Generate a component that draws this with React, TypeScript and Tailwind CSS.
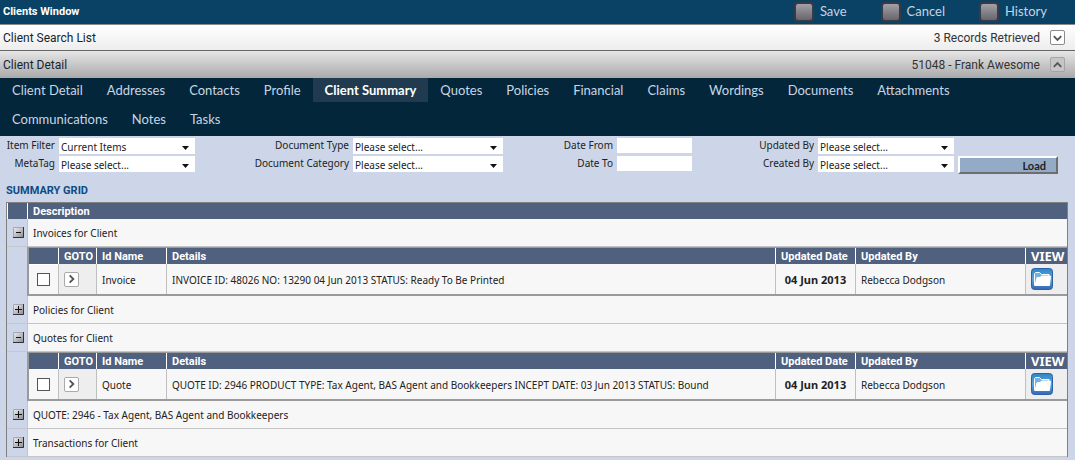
import { Fragment, useState } from "react";
import type { ReactNode } from "react";

type GridItem = {
  id: string;
  name: string;
  details: string;
  updated: string;
  by: string;
};

type GridGroup = {
  title: string;
  items?: GridItem[];
};

const ACTIONS = ["Save", "Cancel", "History"];

const TABS = [
  "Client Detail",
  "Addresses",
  "Contacts",
  "Profile",
  "Client Summary",
  "Quotes",
  "Policies",
  "Financial",
  "Claims",
  "Wordings",
  "Documents",
  "Attachments",
  "Communications",
  "Notes",
  "Tasks",
];

const GROUPS: GridGroup[] = [
  {
    title: "Invoices for Client",
    items: [
      {
        id: "invoice-48026",
        name: "Invoice",
        details: "INVOICE ID: 48026 NO: 13290 04 Jun 2013 STATUS: Ready To Be Printed",
        updated: "04 Jun 2013",
        by: "Rebecca Dodgson",
      },
    ],
  },
  { title: "Policies for Client" },
  {
    title: "Quotes for Client",
    items: [
      {
        id: "quote-2946",
        name: "Quote",
        details:
          "QUOTE ID: 2946 PRODUCT TYPE: Tax Agent, BAS Agent and Bookkeepers INCEPT DATE: 03 Jun 2013 STATUS: Bound",
        updated: "04 Jun 2013",
        by: "Rebecca Dodgson",
      },
    ],
  },
  { title: "QUOTE: 2946 - Tax Agent, BAS Agent and Bookkeepers" },
  { title: "Transactions for Client" },
];

function FolderIcon() {
  return (
    <svg width="22" height="22" viewBox="0 0 22 22" aria-hidden="true">
      <defs>
        <linearGradient id="folder-bg" x1="0" y1="0" x2="0" y2="1">
          <stop offset="0" stopColor="#2f86c4" />
          <stop offset="0.5" stopColor="#5aa6dc" />
          <stop offset="1" stopColor="#3567b4" />
        </linearGradient>
      </defs>
      <rect x="0.5" y="0.5" width="21" height="21" rx="3" fill="url(#folder-bg)" stroke="#2a62a8" />
      <path d="M3.5 17.5v-12L4.5 4.5h4l2 2h7.5V9" fill="#6fb4e4" stroke="#fff" />
      <path d="M4 17.5 6 9.5h3l1.5-1.5h9l-1 9.5z" fill="#fff" stroke="#fff" strokeLinejoin="round" />
    </svg>
  );
}

function ExpandIcon({ open }: { open: boolean }) {
  return (
    <svg width="11" height="11" viewBox="0 0 11 11" aria-hidden="true" className="block">
      <defs>
        <linearGradient id="expand-bg" x1="0" y1="0" x2="1" y2="1">
          <stop offset="0" stopColor="#f4f4f6" />
          <stop offset="1" stopColor="#85858f" />
        </linearGradient>
      </defs>
      <path d="M0 0h11v11H0z" fill="url(#expand-bg)" />
      <path d="M.5 11V.5H11" fill="none" stroke="#a4a6ae" />
      <path d="M0 10.5h10.5V0" fill="none" stroke="#30303c" />
      <path d={open ? "M3 5.5h5" : "M2 5.5h7M5.5 2v7"} stroke="#111" />
    </svg>
  );
}

function Chevron({ dir }: { dir: "up" | "down" | "right" }) {
  const paths = {
    up: "M3 9l4-4 4 4",
    down: "M3 5l4 4 4-4",
    right: "M5 3l4 4-4 4",
  };
  return (
    <svg width="14" height="14" viewBox="0 0 14 14" aria-hidden="true">
      <path d={paths[dir]} fill="none" stroke="#55555a" strokeWidth="2" />
    </svg>
  );
}

function PanelBar({
  title,
  info,
  open,
  className,
}: {
  title: string;
  info: string;
  open: boolean;
  className: string;
}) {
  return (
    <div
      className={`flex items-center justify-between bg-linear-to-b pl-[3px] pr-2.5 font-[Roboto,sans-serif] text-[12px] text-[#16242c] ${className}`}
    >
      <h2>{title}</h2>
      <div className="flex items-center gap-2.5">
        <span className="text-[#333]">{info}</span>
        <button
          type="button"
          aria-label={`Toggle ${title}`}
          className={`flex size-[15px] items-center justify-center rounded-xs border ${
            open ? "border-[#a5a5a5] bg-[#c6c6c6]" : "border-[#8c8c8c] bg-white"
          }`}
        >
          <Chevron dir={open ? "up" : "down"} />
        </button>
      </div>
    </div>
  );
}

function FilterLabel({ htmlFor, children }: { htmlFor: string; children: ReactNode }) {
  return (
    <label htmlFor={htmlFor} className="text-right leading-[14px] whitespace-nowrap">
      {children}
    </label>
  );
}

function FilterSelect({ id, value }: { id: string; value: string }) {
  return (
    <div className="relative h-4">
      <select
        id={id}
        defaultValue={value}
        className="block h-4 w-full appearance-none bg-white pt-0.5 pl-0.5 leading-[14px] outline-none"
      >
        <option>{value}</option>
      </select>
      <svg
        width="7"
        height="4"
        viewBox="0 0 7 4"
        aria-hidden="true"
        className="pointer-events-none absolute top-2 right-1.5"
      >
        <path d="M0 0h7L3.5 4z" fill="#111" />
      </svg>
    </div>
  );
}

function ItemTable({ items }: { items: GridItem[] }) {
  const head = "border-l border-white px-[5px] pt-px text-left font-bold whitespace-nowrap";
  const cell = "border-l border-[#bfbfbf] px-[5px]";
  return (
    <table className="w-full table-fixed border-separate border-spacing-0 border-t border-b-2 border-l border-[#9a9a9a]">
      <colgroup>
        <col className="w-[29px]" />
        <col className="w-[38px]" />
        <col className="w-[70px]" />
        <col />
        <col className="w-[80px]" />
        <col className="w-[170px]" />
        <col className="w-[42px]" />
      </colgroup>
      <thead className="bg-[#50607f] font-[Roboto,sans-serif] text-[11px] text-white">
        <tr className="h-4 leading-[15px]">
          <th aria-label="Select" />
          <th className={head}>GOTO</th>
          <th className={head}>Id Name</th>
          <th className={head}>Details</th>
          <th className={head}>Updated Date</th>
          <th className={head}>Updated By</th>
          <th className="border-l border-white pl-[5px] text-left font-['Noto_Sans',sans-serif] text-[13px] font-bold">
            VIEW
          </th>
        </tr>
      </thead>
      <tbody>
        {items.map((item) => (
          <tr key={item.id} className="h-[30px]">
            <td className="border-t border-white">
              <input
                type="checkbox"
                aria-label={`Select ${item.name}`}
                className="mx-auto block size-[13px] appearance-none border border-[#555] bg-white checked:bg-[#50607f]"
              />
            </td>
            <td className={`${cell} bg-[#eee]`}>
              <button
                type="button"
                aria-label={`Go to ${item.name}`}
                className="flex size-[15px] items-center justify-center rounded-xs border border-[#aaa] bg-white"
              >
                <Chevron dir="right" />
              </button>
            </td>
            <td className={`${cell} pt-0.5`}>{item.name}</td>
            <td className={`${cell} pt-0.5`}>{item.details}</td>
            <td className={`${cell} pt-0.5 text-center text-[11px] font-bold whitespace-nowrap`}>
              {item.updated}
            </td>
            <td className={`${cell} pt-0.5`}>{item.by}</td>
            <td className={`${cell} bg-[#eee]`}>
              <button type="button" aria-label={`View ${item.name}`} className="block">
                <FolderIcon />
              </button>
            </td>
          </tr>
        ))}
      </tbody>
    </table>
  );
}

export default function App() {
  const [tab, setTab] = useState("Client Summary");
  const [open, setOpen] = useState(["Invoices for Client", "Quotes for Client"]);

  function toggle(title: string) {
    setOpen((prev) =>
      prev.includes(title) ? prev.filter((t) => t !== title) : [...prev, title],
    );
  }

  return (
    <div className="min-h-screen bg-[#ccd6e8] font-['Noto_Sans',sans-serif] text-[10px] text-[#222]">
      {/* Window title and actions */}
      <header className="flex h-6 items-center justify-between bg-[#0a4266] pr-7 pl-[3px]">
        <h1 className="font-[Roboto,sans-serif] text-[11px] font-bold text-white">Clients Window</h1>
        <div className="flex gap-[34px] font-[Lato,sans-serif] text-[13px] text-[#c3d3e2]">
          {ACTIONS.map((a) => (
            <button key={a} type="button" className="flex items-center gap-1.5">
              <span className="size-5 rounded-sm border-2 border-[#3a3a44] bg-linear-to-b from-[#a3a2a8] to-[#67656d]" />
              {a}
            </button>
          ))}
        </div>
      </header>

      <PanelBar
        title="Client Search List"
        info="3 Records Retrieved"
        open={false}
        className="h-[26px] border-t border-[#8a8a8a] from-white to-[#ededed]"
      />
      <PanelBar
        title="Client Detail"
        info="51048 - Frank Awesome"
        open
        className="h-7 border-t border-[#666] from-[#e6e6e6] to-[#aaaaaa]"
      />

      <nav className="flex flex-wrap gap-y-[5px] bg-[#04263b] pr-4 pb-[5px] font-[Lato,sans-serif] text-[13px] text-[#c8d6e4]">
        {TABS.map((t) => (
          <button
            key={t}
            type="button"
            onClick={() => setTab(t)}
            className={`h-6 px-3 pt-0.5 ${t === tab ? "bg-[#203b4f] font-bold text-white" : ""}`}
          >
            {t}
          </button>
        ))}
      </nav>

      {/* Filters */}
      <form
        onSubmit={(e) => e.preventDefault()}
        className="grid grid-cols-[55px_136px_150fr_150px_106fr_75px_118fr_136px_100px] gap-x-1 gap-y-0.5 pt-0.5 pr-[17px]"
      >
        <FilterLabel htmlFor="item-filter">Item Filter</FilterLabel>
        <FilterSelect id="item-filter" value="Current Items" />
        <FilterLabel htmlFor="doc-type">Document Type</FilterLabel>
        <FilterSelect id="doc-type" value="Please select..." />
        <FilterLabel htmlFor="date-from">Date From</FilterLabel>
        <input id="date-from" type="text" className="h-[15px] w-full bg-white px-0.5 outline-none" />
        <FilterLabel htmlFor="updated-by">Updated By</FilterLabel>
        <FilterSelect id="updated-by" value="Please select..." />
        <span />

        <FilterLabel htmlFor="meta-tag">MetaTag</FilterLabel>
        <FilterSelect id="meta-tag" value="Please select..." />
        <FilterLabel htmlFor="doc-category">Document Category</FilterLabel>
        <FilterSelect id="doc-category" value="Please select..." />
        <FilterLabel htmlFor="date-to">Date To</FilterLabel>
        <input id="date-to" type="text" className="h-[15px] w-full bg-white px-0.5 outline-none" />
        <FilterLabel htmlFor="created-by">Created By</FilterLabel>
        <FilterSelect id="created-by" value="Please select..." />
        <button
          type="submit"
          className="h-[18px] border-2 border-t-white border-r-[#6d6d6d] border-b-[#6d6d6d] border-l-white bg-[#93abc7] pt-0.5 pr-2.5 text-right font-[Lato,sans-serif] text-[11px] leading-3 font-bold"
        >
          Load
        </button>
      </form>

      <section className="pt-[9px] pr-[7px] pl-1.5">
        <h2 className="mb-[3px] font-[Roboto,sans-serif] text-[11px] leading-4 font-bold text-[#0f4a85]">
          SUMMARY GRID
        </h2>
        <div className="border border-b-0 border-[#808080]">
          <table className="w-full table-fixed border-separate border-spacing-0">
            <colgroup>
              <col className="w-5" />
              <col />
            </colgroup>
            <thead className="bg-[#50607f] font-[Roboto,sans-serif] text-[11px] text-white">
              <tr className="h-4 leading-[15px]">
                <th aria-label="Expand" className="border-l border-white" />
                <th className="border-l border-white pt-px pl-[5px] text-left font-bold">
                  Description
                </th>
              </tr>
            </thead>
            <tbody>
              {GROUPS.map((g) => {
                const isOpen = open.includes(g.title);
                return (
                  <Fragment key={g.title}>
                    <tr className="h-7">
                      <td className="border-b border-[#c4c8ce] pl-1.5">
                        <button
                          type="button"
                          aria-label={`${isOpen ? "Collapse" : "Expand"} ${g.title}`}
                          onClick={() => toggle(g.title)}
                          className="block"
                        >
                          <ExpandIcon open={isOpen} />
                        </button>
                      </td>
                      <td className="border-b border-l border-[#c4c4c4] bg-[#f7f7f7] pt-0.5 pl-[5px]">
                        {g.title}
                      </td>
                    </tr>
                    {isOpen && g.items ? (
                      <tr>
                        <td />
                        <td className="border-l border-[#9a9a9a] bg-[#f7f7f7]">
                          <ItemTable items={g.items} />
                        </td>
                      </tr>
                    ) : null}
                  </Fragment>
                );
              })}
            </tbody>
          </table>
        </div>
      </section>
    </div>
  );
}
